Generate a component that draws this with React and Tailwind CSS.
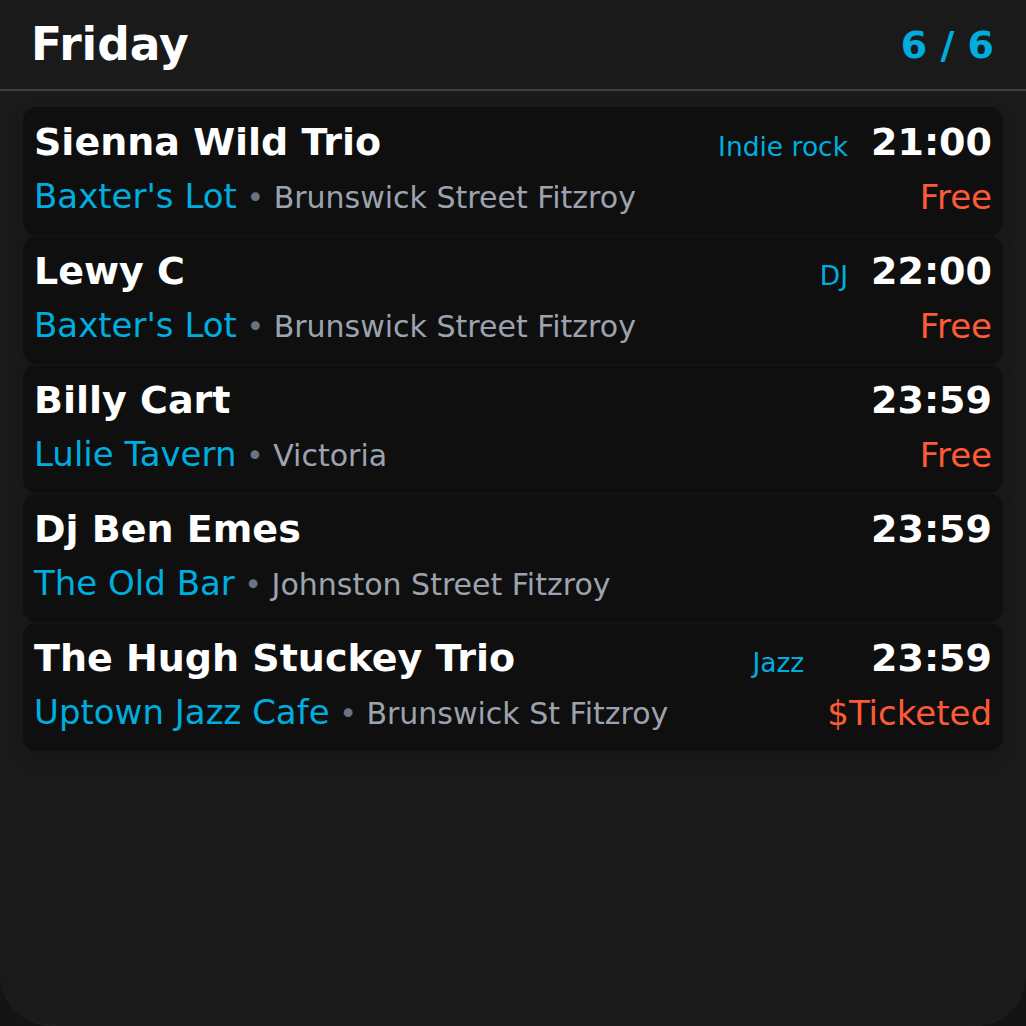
const events = [
  {
    name: "Sienna Wild Trio",
    venue: "Baxter's Lot",
    place: "Brunswick Street Fitzroy",
    genre: "Indie rock",
    time: "21:00",
    price: "Free",
  },
  {
    name: "Lewy C",
    venue: "Baxter's Lot",
    place: "Brunswick Street Fitzroy",
    genre: "DJ",
    time: "22:00",
    price: "Free",
  },
  {
    name: "Billy Cart",
    venue: "Lulie Tavern",
    place: "Victoria",
    time: "23:59",
    price: "Free",
  },
  {
    name: "Dj Ben Emes",
    venue: "The Old Bar",
    place: "Johnston Street Fitzroy",
    time: "23:59",
  },
  {
    name: "The Hugh Stuckey Trio",
    venue: "Uptown Jazz Cafe",
    place: "Brunswick St Fitzroy",
    genre: "Jazz",
    time: "23:59",
    price: "$Ticketed",
  },
];

function EventCard({ event }) {
  return (
    <div className="flex items-start h-[128px] rounded-[14px] bg-[#0f0f0f] px-[11px] pt-[12px] shadow-[0_8px_16px_rgba(0,0,0,0.12)]">
      <div className="flex-1 min-w-0 flex flex-col">
        <div className="text-[38px] leading-[46px] font-bold text-white whitespace-nowrap">
          {event.name}
        </div>
        <div className="mt-[11px] leading-[40px] whitespace-nowrap">
          <span className="text-[34px] text-[#00addf]">{event.venue}</span>
          <span className="text-[30px] text-[#6b7280]"> • </span>
          <span className="text-[30px] text-[#9ca3af]">{event.place}</span>
        </div>
      </div>
      {event.genre && (
        <div className="mr-[23px] mt-[6px] text-[26.5px] leading-[44px] text-[#00addf] whitespace-nowrap">
          {event.genre}
        </div>
      )}
      <div className="flex flex-col items-end">
        <div className="text-[38px] leading-[46px] font-bold text-white">
          {event.time}
        </div>
        {event.price && (
          <div className="mt-[12px] text-[34px] leading-[40px] text-[#ff5a36] whitespace-nowrap">
            {event.price}
          </div>
        )}
      </div>
    </div>
  );
}

export default function App() {
  return (
    <div
      className="min-h-screen bg-[#141414]"
      style={{ fontFamily: '"DejaVu Sans", Verdana, sans-serif' }}
    >
      <div className="h-[1026px] bg-[#1a1a1a] rounded-b-[52px] shadow-[inset_0_-1px_2px_rgba(255,255,255,0.04)] flex flex-col">
        <div className="flex items-center justify-between h-[91px] pl-[31px] pr-[32px] border-b-2 border-[#3a3f4b]">
          <h1 className="text-[45.5px] font-bold text-white leading-none">Friday</h1>
          <div className="text-[38px] font-bold text-[#00addf] leading-none">
            6 / 6
          </div>
        </div>
        <div className="flex flex-col gap-px px-[23px] pt-[16px]">
          {events.map((event, i) => (
            <EventCard key={i} event={event} />
          ))}
        </div>
      </div>
    </div>
  );
}
